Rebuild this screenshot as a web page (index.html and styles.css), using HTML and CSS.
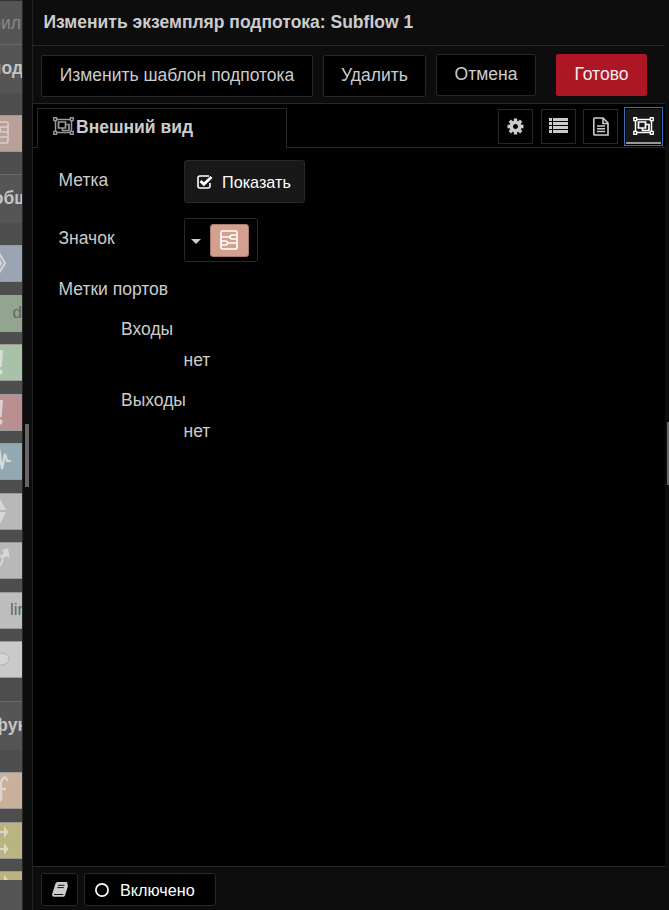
FILE: index.html
```html
<!DOCTYPE html>
<html lang="ru">
<head>
<meta charset="utf-8">
<title>Subflow 1</title>
<link rel="stylesheet" href="styles.css">
</head>
<body>
<svg width="0" height="0" class="defs">
  <symbol id="group" viewBox="0 0 21 18">
    <path fill="none" stroke="currentColor" stroke-width="1.500" d="M3 2.500h15M3 15.500h15M2.500 3v12M18.500 3v12"/>
    <path fill="none" stroke="currentColor" stroke-width="1.700" d="M5.500 5h7v6h-7zM13 7.500h3v6H9.500v-2"/>
    <path fill="#000" stroke="currentColor" stroke-width="1.400" d="M.8.8h2.800v2.800H.8zM17.400.8h2.800v2.800h-2.800zM.8 14.400h2.800v2.800H.8zM17.400 14.400h2.800v2.800h-2.800z"/>
  </symbol>
  <symbol id="subflow" viewBox="0 0 18 20">
    <path fill="none" stroke="currentColor" stroke-width="1.600" d="M2.500 1h13q1.500 0 1.500 1.500v15q0 1.500-1.500 1.500h-13Q1 19 1 17.500v-15Q1 1 2.500 1zM1 7h9M17 5h-5q-2 0-2 2t2 2h5M1 11h4.500q2 0 2 2t-2 2H1M7.500 13H17"/>
  </symbol>
</svg>
<div class="app">
  <aside class="palette">
    <div class="search">фил</div>
    <div class="head">под</div>
    <div class="nodes first">
      <div class="node pink"><svg viewBox="0 0 22 37"><g fill="none" stroke="#d6d0cd" stroke-width="1.600"><path d="M0 7h6q2 0 2 2v17q0 2-2 2H0M8 12H2q-2 0-2 2.500T2 17h6M0 22h8"/></g></svg></div>
    </div>
    <div class="head common-head">общ</div>
    <div class="nodes common">
      <div class="node blue"><svg viewBox="0 0 22 37"><path fill="none" stroke="#d4d6d8" stroke-width="2" d="M-1 8l6 10-6 10M-1 14l2 4-2 4"/></svg></div>
      <div class="node green">d</div>
      <div class="node mint"><svg viewBox="0 0 22 37"><path fill="#d6dcd6" d="M-2 6h5L1.800 23H-2zM-1 25.500h2q2 0 1.500 2.700T0 31h-1z"/></svg></div>
      <div class="node red"><svg viewBox="0 0 22 37"><path fill="#dccfcf" d="M-2 6h5L1.800 23H-2zM-1 25.500h2q2 0 1.500 2.700T0 31h-1z"/></svg></div>
      <div class="node teal"><svg viewBox="0 0 22 37"><path fill="none" stroke="#d4dadc" stroke-width="2.200" d="M-1 5l3 21 3-15 2 7h4"/></svg></div>
      <div class="node gray"><svg viewBox="0 0 22 37"><path fill="#d6d6d6" d="M0 6l6 11H0zM0 19h6L0 31z"/></svg></div>
      <div class="node gray"><svg viewBox="0 0 22 37"><path fill="#d6d6d6" d="M2 8l6-2 2 11-3-3-3 2-3-3 3-2z"/><path fill="none" stroke="#d6d6d6" stroke-width="1.800" d="M-1 14q4-.5 3.500 4T-1 24"/></svg></div>
      <div class="node light">lin</div>
      <div class="node pale"><svg viewBox="0 0 22 37"><path fill="#d4d4d4" stroke="#aaa" stroke-width=".8" d="M0 12q9 0 9 6t-9 6"/></svg></div>
    </div>
    <div class="head func-head">фун</div>
    <div class="nodes func">
      <div class="node orange"><svg viewBox="0 0 22 37"><path fill="none" stroke="#ddd4cc" stroke-width="2.600" d="M7.500 9Q6 4 3 6.500T1 19t-2 10M-1 17h7"/></svg></div>
      <div class="node yellow"><svg viewBox="0 0 22 37"><path fill="none" stroke="#dad8c6" stroke-width="2.200" d="M0 10h5M0 27h5"/><path fill="#dad8c6" d="M4 4l4.500 6L4 16zM4 21l4.500 6L4 33z"/></svg></div>
      <div class="node yellow"><svg viewBox="0 0 22 37"><path fill="#dad8c6" d="M4 4l5 6H4z"/></svg></div>
    </div>
    <div class="foot"></div>
  </aside>
  <div class="separator"><i></i></div>
  <main class="tray">
    <header class="title">Изменить экземпляр подпотока: Subflow 1</header>
    <div class="toolbar">
      <button class="b1">Изменить шаблон подпотока</button>
      <button class="b2">Удалить</button>
      <button class="b3">Отмена</button>
      <button class="b4">Готово</button>
    </div>
    <nav class="tabs">
      <div class="tab"><svg class="gicon"><use href="#group"/></svg><span>Внешний вид</span></div>
      <div class="tabicons">
        <div class="ti"><svg width="17" height="17" viewBox="-8.500 -8.500 17 17"><circle r="4.300" fill="none" stroke="currentColor" stroke-width="3.600"/><g stroke="currentColor" stroke-width="3.400"><path d="M0-8v3M0 5v3M-8 0h3M5 0h3M-5.700-5.700l2 2M3.700 3.700l2 2M-5.700 5.700l2-2M3.700-3.700l2-2"/></g></svg></div>
        <div class="ti list"><svg width="19" height="15" viewBox="0 0 19 15"><path fill="currentColor" d="M0 0h3v3H0zM4 0h15v3H4zM0 4h3v3H0zM4 4h15v3H4zM0 8h3v3H0zM4 8h15v3H4zM0 12h3v3H0zM4 12h15v3H4z"/></svg></div>
        <div class="ti"><svg width="16" height="19" viewBox="0 0 16 19"><path fill="none" stroke="currentColor" stroke-width="1.600" d="M1.500 1h8.500l5 5v12H1.500q-.7 0-.7-.7V1.700Q.8 1 1.500 1zM10 1v5.500h5M4 9h8M4 11.800h8M4 14.500h8"/></svg></div>
        <div class="ti active"><svg class="gicon"><use href="#group"/></svg></div>
      </div>
    </nav>
    <section class="form">
      <div class="row r1"><label>Метка</label>
        <div class="toggle"><svg width="16" height="14" viewBox="0 0 16 14"><path fill="none" stroke="#fff" stroke-width="1.600" d="M12 1H3Q1 1 1 3v8q0 2 2 2h8q2 0 2-2V8"/><path fill="none" stroke="#fff" stroke-width="2.800" d="M3.500 6l3.300 3.300L14.500 2"/></svg><span>Показать</span></div>
      </div>
      <div class="row r2"><label>Значок</label>
        <div class="picker"><i class="caret"></i><div class="swatch"><svg width="18" height="20"><use href="#subflow"/></svg></div></div>
      </div>
      <div class="line">Метки портов</div>
      <div class="line sub">Входы</div>
      <div class="line none">нет</div>
      <div class="line sub">Выходы</div>
      <div class="line none">нет</div>
    </section>
    <footer class="bottom">
      <div class="book"><svg width="16" height="15" viewBox="0 0 16 15"><path fill="#ccc" d="M5.500 0H14q1.800 0 1.400 1.500L15.600 3q.5.500.3 1.300L13 13.500q-.4 1.300-1.800 1.300H2Q0 14.800 0 12.500L3.500 1.500Q4 0 5.500 0z"/><path stroke="#000" stroke-width=".9" fill="none" d="M6 3.300h6.500M5.300 5.600h6.500M2 12.500h9.300"/></svg></div>
      <div class="enabled"><svg width="14" height="14"><circle cx="7" cy="7" r="6.100" fill="none" stroke="#fff" stroke-width="1.700"/></svg><span>Включено</span></div>
    </footer>
  </main>
  <div class="edge"><i></i></div>
</div>
</body>
</html>
```
FILE: styles.css
```css
* { box-sizing: border-box; }
body { margin: 0; background: #000; color: #ccc; font: 17.5px/20px "Liberation Sans", Arial, sans-serif; overflow: hidden; }
.defs { display: block; position: absolute; }
svg { display: block; flex: none; }
.app { display: flex; width: 669px; height: 910px; }
.palette { width: 22px; overflow: hidden; background: #4e4e4e; display: flex; flex-direction: column; }
.search, .head { display: flex; justify-content: flex-end; align-items: center; flex: none; white-space: nowrap; background: #555; }
.search { height: 44px; color: #888; border-top: 1px solid #333; padding-right: 1px; }
.head { height: 49px; border-top: 1px solid #696969; font-weight: bold; margin-right: -1px; padding-bottom: 2px; color: #c4c4c4; }
.common-head { margin-right: -7px; }
.func-head { margin-right: -6px; }
.nodes { display: flex; flex-direction: column; gap: 12.5px; overflow: hidden; flex: none; }
.first { height: 81px; padding-top: 22px; }
.common { height: 478px; padding-top: 22px; }
.func { height: 130px; padding-top: 22px; }
.node { height: 37px; flex: none; display: flex; align-items: center; justify-content: flex-end; border: solid #999; border-width: 1px 0; font-size: 17px; color: #666; white-space: nowrap; overflow: hidden; }
.node svg { width: 22px; height: 37px; }
.pink { background: #b9a199; }
.blue { background: #9aa5b1; }
.green { background: #93a58f; border-color: #93a58f; }
.mint { background: #a9c0a9; }
.red { background: #b98f8f; }
.teal { background: #93a9b1; }
.gray { background: #b8b8b8; }
.light { background: #bebebe; padding-left: 10px; justify-content: flex-start; }
.pale { background: #cacaca; }
.orange { background: #c9b09a; }
.yellow { background: #bab480; }
.foot { flex: 1; background: #555; }
.separator { width: 10px; background: #0d0d0d; border-left: 1px solid #282828; padding: 424px 0 0 2px; }
.separator i { display: block; width: 4px; height: 63px; background: #666; }
.tray { width: 633px; border-left: 1px solid #222; display: flex; flex-direction: column; }
.title { height: 46px; background: #0d0d0d; border-bottom: 1px solid #282828; padding: 12px 0 0 10.5px; font-weight: bold; white-space: nowrap; }
.toolbar { height: 58px; background: #0d0d0d; border-bottom: 1px solid #282828; display: flex; padding: 8px 0 0 8px; }
button { font: inherit; color: #ccc; background: #000; border: 1px solid #282828; border-radius: 2px; padding: 0 0 2px; height: 42px; white-space: nowrap; }
.b1 { width: 272px; margin-top: 1px; }
.b2 { width: 103px; margin: 1px 0 0 10px; }
.b3 { width: 100px; margin-left: 10px; }
.b4 { width: 91px; margin-left: 20px; background: #ad1625; border-color: #ad1625; color: #eee; }
.tabs { height: 44px; display: flex; background: linear-gradient(#282828, #282828) 0 100% / 100% 1px no-repeat; padding: 4px 2px 0 4px; justify-content: space-between; }
.tab { width: 250px; height: 40px; background: #000; border: 1px solid #282828; border-bottom: 0; display: flex; padding: 8px 0 0 15px; font-weight: bold; }
.gicon { width: 21px; height: 18px; }
.tab .gicon { color: #999; margin-right: 2px; }
.tabicons { display: flex; gap: 8px; }
.ti { width: 35px; height: 35px; margin-top: 1px; border: 1px solid #282828; display: flex; align-items: center; justify-content: center; }
.ti:nth-child(3) { margin-left: -1px; }
.list { padding-bottom: 2px; }
.ti.active { width: 39px; height: 39px; margin: -1px 0 0 -2px; padding-bottom: 2px; border-color: #3c70b5; background: linear-gradient(#999, #999) 1px 34px / 35px 2px no-repeat, #181818; color: #fff; box-shadow: inset 0 0 0 1px #000; }
.form { flex: 1; padding: 12px 0 0 25.5px; }
.row { display: flex; }
.r1 { height: 58px; }
.r2 { height: 61px; }
label { width: 125.5px; padding-top: 10px; }
.toggle { width: 121px; height: 43px; display: flex; align-items: center; border: 1px solid #282828; border-radius: 3px; background: #181818; color: #fff; padding-left: 12px; font-size: 16.2px; gap: 9px; }
.toggle span, .enabled span { padding-top: 1px; }
.picker { width: 74px; height: 44px; border: 1px solid #282828; border-radius: 3px; display: flex; align-items: center; padding-left: 6px; }
.caret { border: 5px solid transparent; border-top-color: #ccc; border-bottom: 0; margin: 3px 9px 0 0; }
.swatch { width: 39px; height: 33px; border: 1px solid #a97b6e; border-radius: 3px; background: #d49f8f; color: #fff; display: flex; align-items: center; justify-content: center; padding-right: 1px; }
.line { height: 20px; }
.sub { padding-left: 62.5px; margin-top: 20px; }
.none { padding-left: 125px; margin-top: 11px; }
.bottom { height: 44px; background: #0d0d0d; border-top: 1px solid #282828; display: flex; gap: 6px; padding: 6px 0 0 8px; }
.book, .enabled { height: 33px; background: #000; border: 1px solid #282828; border-radius: 3px; display: flex; align-items: center; }
.book { width: 37px; justify-content: center; }
.enabled { width: 132px; padding-left: 10px; gap: 11px; font-size: 16.2px; color: #fff; }
.edge { width: 4px; background: #0d0d0d; padding: 422px 0 0 2px; }
.edge i { display: block; height: 63px; background: #666; }
```
